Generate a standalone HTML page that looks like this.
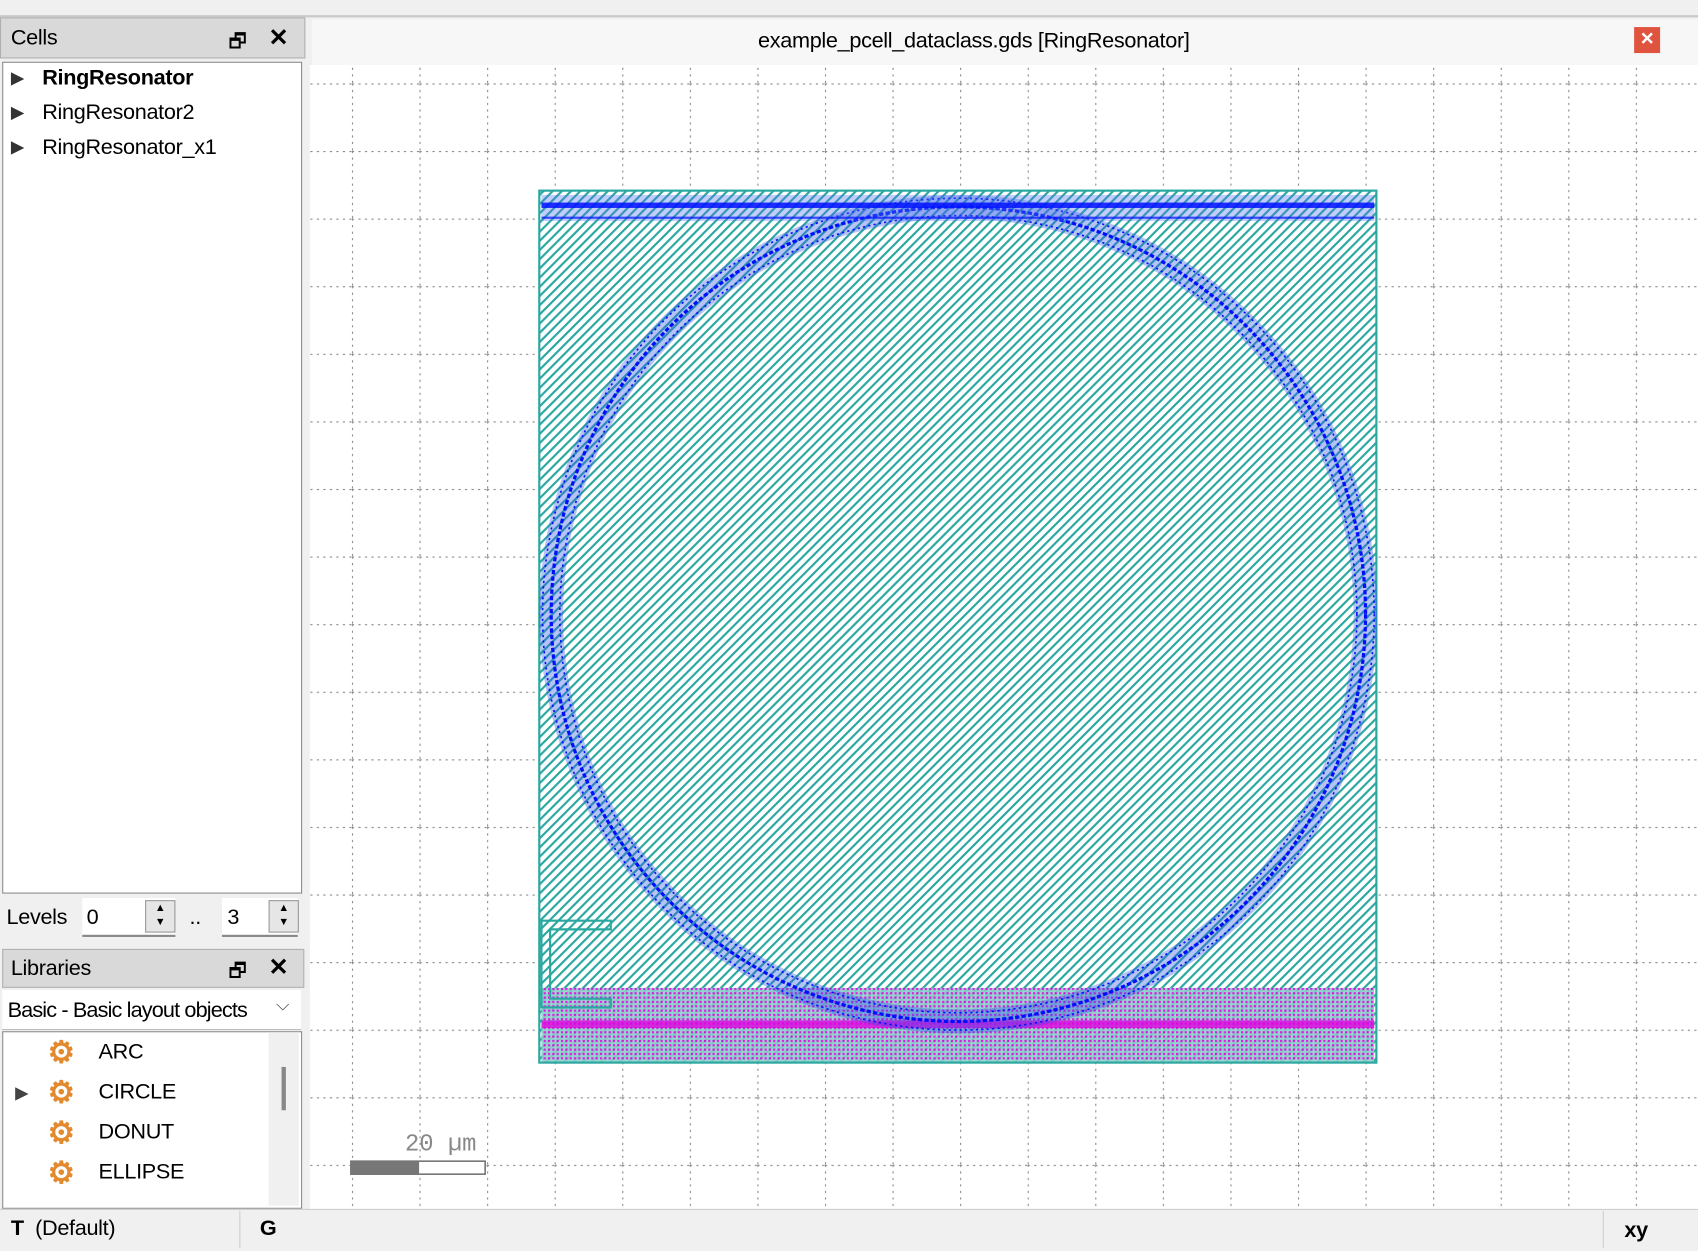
<!DOCTYPE html>
<html><head><style>
body{margin:0;width:1698px;height:1250px;overflow:hidden;background:#f0f0f0;font-family:"Liberation Sans",sans-serif}
#w{position:absolute;left:0;top:0;width:1568px;height:1154px;transform:scale(1.08291,1.08319);transform-origin:0 0}
.a{position:absolute}
.t{font-size:20px;color:#000;letter-spacing:-0.3px}
</style></head><body><div id="w">
<div class="a" style="left:0;top:0;width:1568px;height:14px;background:#f0f0f0;border-bottom:2px solid #c8c8c8"></div>
<div class="a" style="left:0;top:16px;width:280px;height:36px;background:#d9d9d9;border:1px solid #b0b0b0"></div>
<div class="a t" style="left:10px;top:24px">Cells</div>
<div class="a" style="left:211px;top:26px;font-size:18px">&#x1F5D7;</div>
<div class="a" style="left:248px;top:22px;font-size:22px;font-weight:bold">✕</div>
<div class="a" style="left:2px;top:57px;width:275px;height:766px;background:#fff;border:1px solid #8a8a8a"></div>
<div class="a t" style="left:10px;top:62px;font-size:16px;color:#333">▶</div>
<div class="a t" style="left:10px;top:94px;font-size:16px;color:#333">▶</div>
<div class="a t" style="left:10px;top:126px;font-size:16px;color:#333">▶</div>
<div class="a t" style="left:39px;top:61px;font-weight:bold">RingResonator</div>
<div class="a t" style="left:39px;top:93px">RingResonator2</div>
<div class="a t" style="left:39px;top:125px">RingResonator_x1</div>
<div class="a t" style="left:6px;top:836px">Levels</div>
<div class="a" style="left:76px;top:829px;width:86px;height:34px;background:#fff;border-bottom:2px solid #888"></div>
<div class="a t" style="left:80px;top:836px">0</div>
<div class="a" style="left:134px;top:831px;width:26px;height:28px;background:#e6e6e6;border:1px solid #999;font-size:10px;text-align:center;line-height:13px">▲<br>▼</div>
<div class="a t" style="left:175px;top:836px">..</div>
<div class="a" style="left:205px;top:829px;width:70px;height:34px;background:#fff;border-bottom:2px solid #888"></div>
<div class="a t" style="left:210px;top:836px">3</div>
<div class="a" style="left:248px;top:831px;width:26px;height:28px;background:#e6e6e6;border:1px solid #999;font-size:10px;text-align:center;line-height:13px">▲<br>▼</div>
<div class="a" style="left:2px;top:876px;width:277px;height:34px;background:#d9d9d9;border:1px solid #b0b0b0"></div>
<div class="a t" style="left:10px;top:883px">Libraries</div>
<div class="a" style="left:211px;top:884px;font-size:18px">&#x1F5D7;</div>
<div class="a" style="left:248px;top:880px;font-size:22px;font-weight:bold">✕</div>
<div class="a" style="left:2px;top:914px;width:276px;height:36px;background:#fff;border-bottom:1px solid #bbb"></div>
<div class="a t" style="left:7px;top:922px;letter-spacing:-0.8px">Basic - Basic layout objects</div>
<div class="a" style="left:255px;top:920px;font-size:16px;color:#555">⌵</div>
<div class="a" style="left:2px;top:952px;width:275px;height:162px;background:#fff;border:1px solid #8a8a8a"></div>
<div class="a" style="left:248px;top:953px;width:28px;height:160px;background:#f0f0f0"></div>
<div class="a" style="left:260px;top:985px;width:4px;height:40px;background:#888"></div>
<div class="a t" style="left:14px;top:999px;font-size:16px;color:#444">▶</div>
<div class="a t" style="left:44px;top:955px;color:#e38a2e;font-size:28px;font-weight:bold">⚙</div>
<div class="a t" style="left:44px;top:992px;color:#e38a2e;font-size:28px;font-weight:bold">⚙</div>
<div class="a t" style="left:44px;top:1029px;color:#e38a2e;font-size:28px;font-weight:bold">⚙</div>
<div class="a t" style="left:44px;top:1066px;color:#e38a2e;font-size:28px;font-weight:bold">⚙</div>
<div class="a t" style="left:91px;top:960px">ARC</div>
<div class="a t" style="left:91px;top:997px">CIRCLE</div>
<div class="a t" style="left:91px;top:1034px">DONUT</div>
<div class="a t" style="left:91px;top:1071px">ELLIPSE</div>
<div class="a" style="left:0;top:1116px;width:1568px;height:38px;background:#f0f0f0;border-top:1px solid #ccc"></div>
<div class="a t" style="left:10px;top:1123px"><b>T</b> &nbsp;(Default)</div>
<div class="a" style="left:221px;top:1118px;width:1px;height:34px;background:#ccc"></div>
<div class="a t" style="left:240px;top:1123px;font-weight:bold">G</div>
<div class="a" style="left:1480px;top:1118px;width:1px;height:34px;background:#ccc"></div>
<div class="a t" style="left:1500px;top:1125px;font-weight:bold">xy</div>
<div class="a" style="left:288px;top:18px;width:1280px;height:42px;background:#f7f7f7"></div>
<div class="a t" style="left:700px;top:27px">example_pcell_dataclass.gds [RingResonator]</div>
<div class="a" style="left:1509px;top:25px;width:24px;height:24px;background:#e0533e;color:#fff;text-align:center;line-height:24px;font-weight:bold;font-size:16px">✕</div>
<svg class="a" style="left:286px;top:60px" width="1282" height="1056">
<defs>
<pattern id="g" width="62.4" height="62.4" patternUnits="userSpaceOnUse" x="39" y="17">
<line x1="0" y1="0" x2="62.4" y2="0" stroke="#888" stroke-width="2" stroke-dasharray="2 4"/>
<line x1="0" y1="0" x2="0" y2="62.4" stroke="#888" stroke-width="2" stroke-dasharray="2 4"/>
</pattern>
<pattern id="h" width="6" height="6" patternUnits="userSpaceOnUse" patternTransform="rotate(45)">
<rect width="6" height="6" fill="#fff"/><rect width="2" height="6" fill="#2aa8a0"/>
</pattern>
<pattern id="m" width="4" height="4" patternUnits="userSpaceOnUse">
<rect width="4" height="4" fill="#8ccfca"/><rect width="2" height="2" fill="#e000e0"/>
</pattern>
</defs>
<rect width="1282" height="1056" fill="#fff"/>
<rect width="1282" height="1056" fill="url(#g)"/>
<rect x="212" y="116" width="773" height="805" fill="url(#h)" stroke="#2aa8a0" stroke-width="2"/>
<rect x="214" y="852" width="769" height="68" fill="url(#m)" opacity=".9"/>
<rect x="214" y="882" width="769" height="7" fill="#e000e0" opacity=".8"/>
<circle cx="599" cy="507" r="376" fill="none" stroke="#3050e8" stroke-width="22" opacity=".35"/>
<circle cx="599" cy="507" r="384" fill="none" stroke="#0010ff" stroke-width="1.5" stroke-dasharray="2 3"/>
<circle cx="599" cy="507" r="376" fill="none" stroke="#0010ff" stroke-width="3" stroke-dasharray="4 2"/>
<circle cx="599" cy="507" r="368" fill="none" stroke="#0010ff" stroke-width="1.5" stroke-dasharray="2 3"/>
<rect x="214" y="120" width="769" height="24" fill="#5070f0" opacity=".35"/>
<rect x="214" y="127" width="769" height="5" fill="#0010ff" opacity=".85"/>
<rect x="214" y="140" width="769" height="2" fill="#0010ff" opacity=".7"/>
<path d="M214 790h64v8h-56v64h56v8h-64z" fill="none" stroke="#2aa8a0" stroke-width="2"/>
<text x="88" y="1002" font-family="Liberation Mono,monospace" font-size="22" fill="#888">20 µm</text>
<rect x="38" y="1012" width="124" height="12" fill="#fff" stroke="#777" stroke-width="1.5"/>
<rect x="38" y="1012" width="63" height="12" fill="#777"/>
</svg>
</div></body></html>
